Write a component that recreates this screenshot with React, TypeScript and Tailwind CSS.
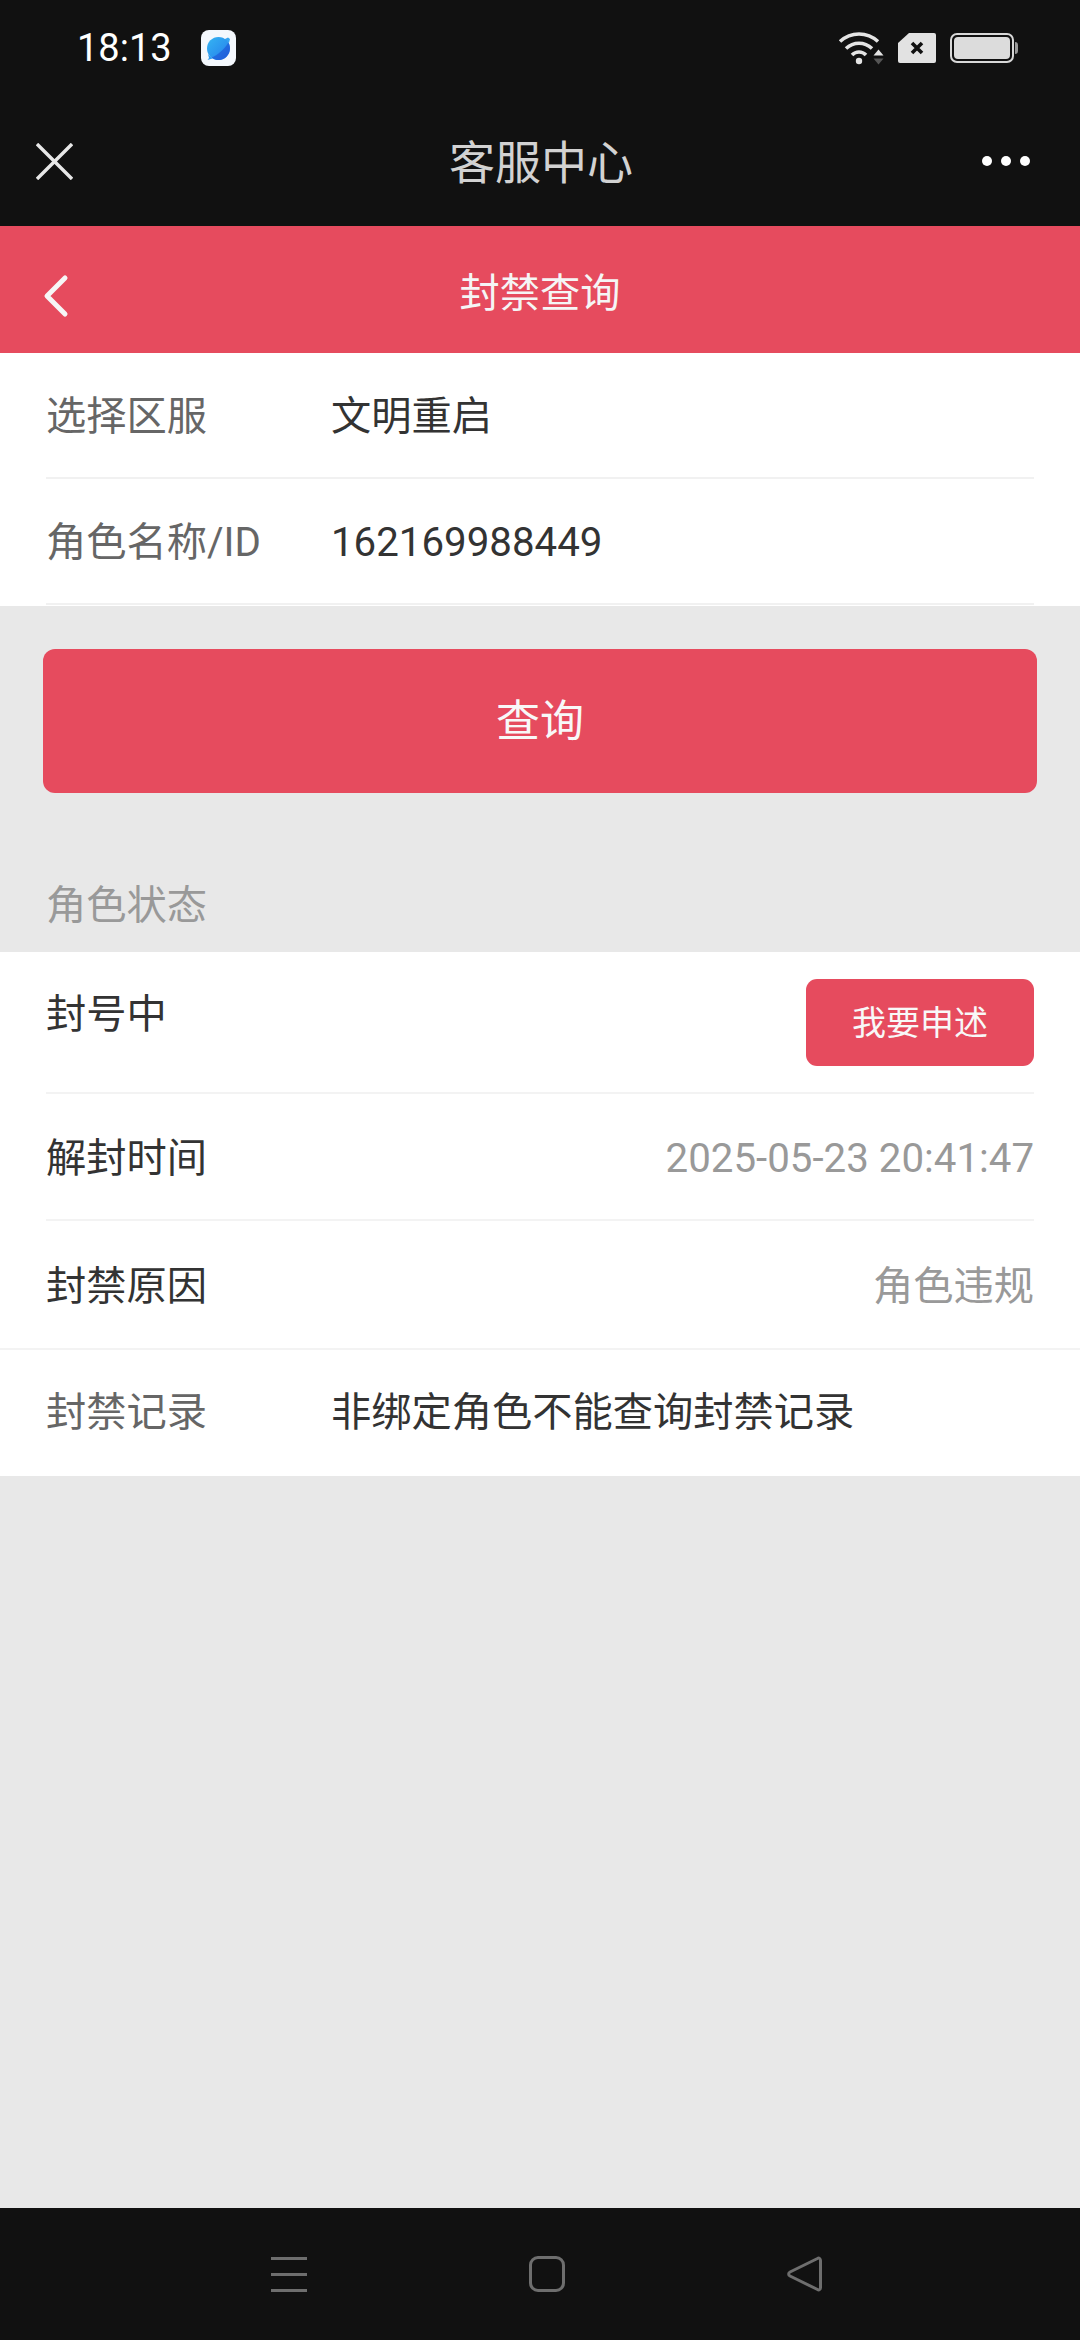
const font = "font-['Roboto','Noto_Sans_CJK_SC',sans-serif]";

function Wifi() {
  return (
    <svg width="46" height="34" viewBox="0 0 46 34" fill="none">
      <path d="M2 10.5C13 0.5 29 0.5 40 10.5" stroke="#e4e4e4" strokeWidth="3.6" />
      <path d="M8 17.5C15.5 10.5 26.5 10.5 34 17.5" stroke="#e4e4e4" strokeWidth="3.6" />
      <path d="M14 24C18 20 24 20 28 24" stroke="#e4e4e4" strokeWidth="3.6" />
      <circle cx="21" cy="30" r="3.2" fill="#e4e4e4" />
      <path d="M35.5 24.5L40.5 18.5L45.5 24.5Z" fill="#e4e4e4" />
      <path d="M35.5 27.5L40.5 33.5L45.5 27.5Z" fill="#555" />
    </svg>
  );
}

function Sim() {
  return (
    <svg width="38" height="30" viewBox="0 0 38 30">
      <path d="M11 0H36a2 2 0 0 1 2 2V28a2 2 0 0 1-2 2H2a2 2 0 0 1-2-2V10Z" fill="#e2e2e2" />
      <path d="M14 10L24 20M24 10L14 20" stroke="#111" strokeWidth="3.6" />
    </svg>
  );
}

function Battery() {
  return (
    <div className="flex items-center">
      <div className="w-[64px] h-[30px] rounded-[7px] border-2 border-[#d8d8d8] p-[2px]">
        <div className="w-full h-full rounded-[4px] bg-[#dcdcdc]" />
      </div>
      <div className="w-[3px] h-[12px] ml-[1px] rounded-r-sm bg-[#9a9a9a]" />
    </div>
  );
}

function AppBadge() {
  return (
    <div className="w-[35px] h-[36px] rounded-[8px] bg-[#f4f8fd] flex items-center justify-center">
      <svg width="29" height="29" viewBox="0 0 29 29">
        <defs>
          <linearGradient id="planet" x1="0" y1="0" x2="1" y2="1">
            <stop offset="0" stopColor="#35b5f2" />
            <stop offset="0.6" stopColor="#2b93ee" />
            <stop offset="1" stopColor="#1f5fdc" />
          </linearGradient>
        </defs>
        <path d="M24 3.5L26 5L25 9L20 5.5Z" fill="#35a4ef" />
        <path d="M4 20L5 24L3.5 26L8.5 24.5Z" fill="#2f9cee" />
        <circle cx="14.5" cy="14.5" r="11.5" fill="url(#planet)" />
        <path d="M7.5 23.5C14 21 21 14.5 24.5 8.5C27.5 14 25.5 20 21.5 23.5C17.5 26.5 11.5 27 7.5 23.5Z" fill="#1e5ad8" opacity="0.7" />
      </svg>
    </div>
  );
}

function FormRow({ label, value }: { label: string; value: string }) {
  return (
    <div className="h-[126px] pt-[4px] flex items-center border-b-2 border-[#f1f1f1]">
      <span className="w-[285px] shrink-0 text-[#666]">{label}</span>
      <span className="text-[#333]">{value}</span>
    </div>
  );
}

function InfoRow({ label, value, last }: { label: string; value: string; last?: boolean }) {
  return (
    <div className={`mx-[46px] h-[127px] pt-[5px] flex items-center justify-between ${last ? "" : "border-b-2 border-[#f3f3f3]"}`}>
      <span className="text-[#333]">{label}</span>
      <span className="text-[#999]">{value}</span>
    </div>
  );
}

export default function App() {
  return (
    <div className={`${font} w-[1080px] h-[2340px] flex flex-col bg-[#e8e8e8] text-[40.25px] leading-none`}>
      <div className="h-[226px] shrink-0 flex flex-col bg-[#111111]">
        <div className="h-[96px] flex items-center justify-between pl-[77px] pr-[62px]">
          <div className="flex items-center gap-[29px]">
            <span className="text-[38px] text-white">18:13</span>
            <AppBadge />
          </div>
          <div className="flex items-center gap-[14px]">
            <Wifi />
            <Sim />
            <Battery />
          </div>
        </div>
        <div className="h-[130px] grid grid-cols-3 items-center pl-[36px] pr-[50px]">
          <svg width="37" height="37" viewBox="0 0 37 37" fill="none" stroke="#e8e8e8" strokeWidth="3.4">
            <path d="M1 1L36 36M36 1L1 36" />
          </svg>
          <span className="justify-self-center pl-[16px] pt-[3px] text-[46px] whitespace-nowrap text-[#d2d2d2]">客服中心</span>
          <div className="justify-self-end flex gap-[9px]">
            <div className="w-[10px] h-[10px] rounded-full bg-white" />
            <div className="w-[10px] h-[10px] rounded-full bg-white" />
            <div className="w-[10px] h-[10px] rounded-full bg-white" />
          </div>
        </div>
      </div>

      <div className="relative h-[127px] shrink-0 pt-[10px] flex items-center justify-center bg-[#e64b5e]">
        <svg className="absolute left-[42px] top-[48px]" width="28" height="44" viewBox="0 0 28 44" fill="none" stroke="#f6f6f6" strokeWidth="5" strokeLinecap="round" strokeLinejoin="round">
          <path d="M23 4L5 22L23 40" />
        </svg>
        <span className="text-[#f5f5f5]">封禁查询</span>
      </div>

      <div className="h-[253px] shrink-0 px-[46px] bg-white">
        <FormRow label="选择区服" value="文明重启" />
        <FormRow label="角色名称/ID" value="162169988449" />
      </div>

      <div className="pt-[43px] px-[43px]">
        <div className="h-[144px] pt-[2px] flex items-center justify-center rounded-[12px] bg-[#e64b5e] text-[44px] text-[#f8f8f8]">
          查询
        </div>
      </div>

      <div className="h-[159px] shrink-0 flex items-end pb-[26px] pl-[46px] text-[#999]">角色状态</div>

      <div className="shrink-0 bg-white">
        <div className="mx-[46px] h-[142px] flex justify-between border-b-2 border-[#f3f3f3]">
          <span className="mt-[43px] text-[#333]">封号中</span>
          <div className="mt-[27px] w-[228px] h-[87px] flex items-center justify-center rounded-[11px] bg-[#e64b5e] text-[34px] text-[#f8f8f8]">
            我要申述
          </div>
        </div>
        <InfoRow label="解封时间" value="2025-05-23 20:41:47" />
        <InfoRow label="封禁原因" value="角色违规" last />
        <div className="h-[128px] flex items-center pl-[46px] border-t-2 border-[#f3f3f3]">
          <span className="w-[285px] shrink-0 text-[#666]">封禁记录</span>
          <span className="text-[#333]">非绑定角色不能查询封禁记录</span>
        </div>
      </div>

      <div className="flex-1" />

      <div className="h-[132px] shrink-0 flex items-center bg-[#111111]">
        <div className="ml-[271px] w-[36px] flex flex-col gap-[13px]">
          <div className="h-[3px] bg-[#6e6e6e]" />
          <div className="h-[3px] bg-[#6e6e6e]" />
          <div className="h-[3px] bg-[#6e6e6e]" />
        </div>
        <div className="ml-[222px] w-[36px] h-[36px] rounded-[9px] border-[3px] border-[#6e6e6e]" />
        <svg className="ml-[222px]" width="36" height="36" viewBox="0 0 36 36" fill="none" stroke="#6e6e6e" strokeWidth="3" strokeLinejoin="round">
          <path d="M33.5 4.5C33.5 2.5 32 1.5 30.5 2.5L3 16C1.2 17 1.2 19 3 20L30.5 33.5C32 34.5 33.5 33.5 33.5 31.5Z" />
        </svg>
      </div>
    </div>
  );
}
